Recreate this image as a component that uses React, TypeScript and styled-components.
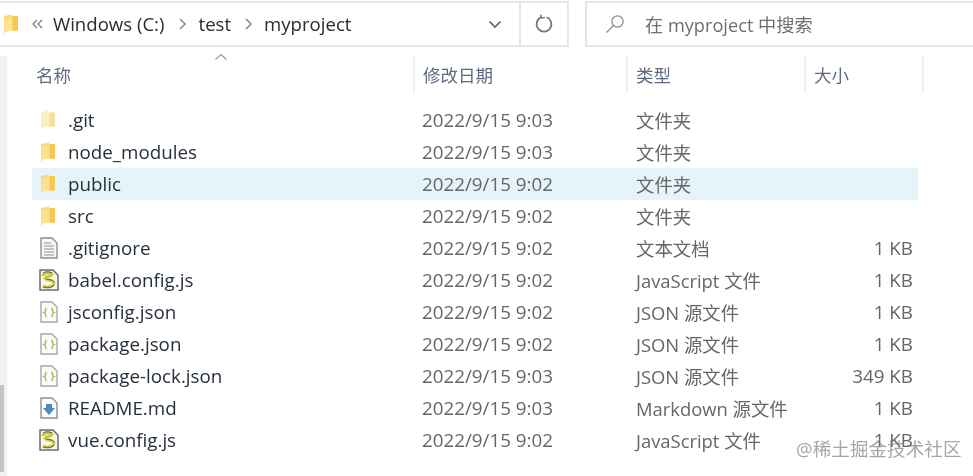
import React from "react";
import styled, { createGlobalStyle } from "styled-components";

const Global = createGlobalStyle`
  html, body { margin: 0; padding: 0; background: #fff; }
  #root { width: 973px; height: 476px; overflow: hidden; }
`;

const Page = styled.div`
  position: relative;
  width: 973px;
  height: 476px;
  overflow: hidden;
  background: #fff;
  font-family: "Open Sans", "Noto Sans CJK SC", sans-serif;
  filter: blur(0.5px);
`;

const TopBar = styled.div`
  display: flex;
  height: 46px;
  padding-top: 1px;
`;

const AddressBox = styled.div`
  width: 519px;
  display: flex;
  align-items: center;
  border-top: 2px solid #e6e6e6;
  border-bottom: 2px solid #e6e6e6;
  box-sizing: border-box;
  font-size: 18.6px;
  color: #2b2b2b;
  padding-left: 3px;
`;

const Crumb = styled.span`
  line-height: 1;
`;

const Chevrons = styled.span`
  display: flex;
  margin: 0 10px 0 13px;
`;

const CrumbSep = styled.span<{ $r: number }>`
  display: flex;
  margin: 0 ${(p) => p.$r}px 0 13px;
`;

const DropArea = styled.div`
  margin-left: auto;
  width: 31px;
  display: flex;
  align-items: center;
`;

const RefreshBox = styled.div`
  width: 50px;
  display: flex;
  align-items: center;
  justify-content: center;
  border: 2px solid #e6e6e6;
  box-sizing: border-box;
`;

const SearchBox = styled.div`
  margin-left: 16px;
  flex: 1;
  display: flex;
  align-items: center;
  border: 2px solid #e6e6e6;
  border-right: none;
  box-sizing: border-box;
  padding-left: 18px;
  gap: 20px;
  color: #6f6f6f;
  font-size: 18.2px;
`;

const Body = styled.div`
  display: flex;
  height: 429px;
`;

const Track = styled.div`
  width: 7px;
  margin-top: 9px;
  background: #f1f1f1;
  position: relative;
  flex: none;
`;

const Thumb = styled.div`
  position: absolute;
  left: 0;
  top: 329px;
  width: 4px;
  height: 87px;
  background: #c6c6c6;
`;

const List = styled.div`
  flex: 1;
  padding-left: 25px;
`;

const Header = styled.div`
  position: relative;
  display: grid;
  grid-template-columns: 383px 213px 178px 118px;
  height: 37px;
  margin-top: 9px;
  margin-bottom: 11px;
`;

const HeadCell = styled.div<{ $pad: number }>`
  display: flex;
  align-items: center;
  padding-left: ${(p) => p.$pad}px;
  border-right: 2px solid #efefef;
  color: #5d6b80;
  font-size: 17.5px;
  box-sizing: border-box;
  height: 37px;
  padding-bottom: 1px;
`;

const SortCaret = styled.svg`
  position: absolute;
  left: 182px;
  top: -3px;
`;

const Row = styled.div<{ $hl?: boolean }>`
  display: grid;
  grid-template-columns: 36px 345px 215px 178px 108px;
  height: 32px;
  align-items: center;
  width: 886px;
  background: ${(p) => (p.$hl ? "#e5f3fb" : "transparent")};
`;

const IconCell = styled.div`
  display: flex;
  justify-content: flex-start;
  padding-left: 8px;
  align-items: center;
`;

const Name = styled.div`
  font-size: 18.8px;
  color: #26303c;
  white-space: nowrap;
  line-height: 1;
`;

const Cell = styled.div`
  font-size: 18.8px;
  color: #666;
  white-space: nowrap;
  padding-left: 9px;
`;

const TypeCell = styled(Cell)`
  padding-left: 8px;
  font-size: 18.4px;
`;

const SizeCell = styled(Cell)`
  text-align: right;
  padding-left: 0;
  padding-right: 1px;
`;

const Watermark = styled.div`
  position: absolute;
  left: 796px;
  top: 437px;
  font-size: 18.5px;
  line-height: 24px;
  color: rgba(130, 130, 130, 0.72);
  white-space: nowrap;
  letter-spacing: 0.1px;
`;

const Folder = () => (
  <svg width="16" height="20" viewBox="0 0 16 20">
    <path d="M1 2 L9 0.5 L9.5 2.5 L15 2 L15 16.5 L5 16.5 L1 19.5 Z" fill="#fcd978" />
    <path d="M1.5 5 L9.5 4 L9.5 16.5 L5 16.5 L1.5 19 Z" fill="#fde294" />
    <path d="M9.5 2 L15 2 L15 16.5 L9.5 16.5 Z" fill="#f7c850" />
  </svg>
);

const PaleFolder = () => (
  <svg width="16" height="20" viewBox="0 0 16 20">
    <path d="M1 2.5 L9 0.5 L9.5 2.5 L15 2.5 L15 16.5 L5 16.5 L1 19.5 Z" fill="#fbeec0" />
    <path d="M9.5 2.5 L15 2.5 L15 16.5 L9.5 16.5 Z" fill="#f8e09c" />
  </svg>
);

const TextFile = () => (
  <svg width="18" height="22" viewBox="0 0 18 22">
    <path d="M1 1 H12 L17 6 V21 H1 Z" fill="#f6f6f6" stroke="#8f8f8f" strokeWidth="1.4" />
    <path d="M4 6 H11 M4 9 H14 M4 12 H14 M4 15 H14 M4 18 H14" stroke="#b4b4b4" strokeWidth="1.3" />
  </svg>
);

const ScriptFile = () => (
  <svg width="22" height="24" viewBox="0 0 22 24" style={{ marginLeft: -2 }}>
    <path d="M2 2 H15 L20 7 V22 H2 Z" fill="#f6f6ee" stroke="#6b6b6b" strokeWidth="1.5" />
    <path d="M5 8 C5 4 13 4 14 6 C14 9 8 8 7 10 C7 13 16 11 16 15 C16 19 8 20 5 18" fill="none" stroke="#c9cc3c" strokeWidth="3" />
    <path d="M5 5 C8 3 12 4 14 5 M8 11 C10 12 14 11 16 14 M5 19 C9 20 14 20 16 17" fill="none" stroke="#55582a" strokeWidth="0.9" />
  </svg>
);

const JsonFile = () => (
  <svg width="18" height="22" viewBox="0 0 18 22">
    <path d="M1 1 H12 L17 6 V21 H1 Z" fill="#fcfcfc" stroke="#a8a8a8" strokeWidth="1.4" />
    <path d="M6.5 7 C5 8 6 11 4.5 11.5 C6 12 5 15 6.5 16 M11.5 7 C13 8 12 11 13.5 11.5 C12 12 13 15 11.5 16" fill="none" stroke="#a3c26a" strokeWidth="1.6" />
  </svg>
);

const MdFile = () => (
  <svg width="18" height="22" viewBox="0 0 18 22">
    <path d="M1 1 H12 L17 6 V21 H1 Z" fill="#fcfcfc" stroke="#8f8f8f" strokeWidth="1.4" />
    <path d="M6 7 H12 V11 H15 L9 18 L3 11 H6 Z" fill="#4a8dbb" />
  </svg>
);

type RowData = { name: string; date: string; type: string; size?: string; icon: React.ReactNode; hl?: boolean };

const rows: RowData[] = [
  { name: ".git", date: "2022/9/15 9:03", type: "文件夹", icon: <PaleFolder /> },
  { name: "node_modules", date: "2022/9/15 9:03", type: "文件夹", icon: <Folder /> },
  { name: "public", date: "2022/9/15 9:02", type: "文件夹", icon: <Folder />, hl: true },
  { name: "src", date: "2022/9/15 9:02", type: "文件夹", icon: <Folder /> },
  { name: ".gitignore", date: "2022/9/15 9:02", type: "文本文档", size: "1 KB", icon: <TextFile /> },
  { name: "babel.config.js", date: "2022/9/15 9:02", type: "JavaScript 文件", size: "1 KB", icon: <ScriptFile /> },
  { name: "jsconfig.json", date: "2022/9/15 9:02", type: "JSON 源文件", size: "1 KB", icon: <JsonFile /> },
  { name: "package.json", date: "2022/9/15 9:02", type: "JSON 源文件", size: "1 KB", icon: <JsonFile /> },
  { name: "package-lock.json", date: "2022/9/15 9:03", type: "JSON 源文件", size: "349 KB", icon: <JsonFile /> },
  { name: "README.md", date: "2022/9/15 9:03", type: "Markdown 源文件", size: "1 KB", icon: <MdFile /> },
  { name: "vue.config.js", date: "2022/9/15 9:02", type: "JavaScript 文件", size: "1 KB", icon: <ScriptFile /> },
];

const Chevron = () => (
  <svg width="9" height="14" viewBox="0 0 9 14">
    <path d="M2 2 L7 7 L2 12" fill="none" stroke="#8a8a8a" strokeWidth="1.5" />
  </svg>
);

export default function App() {
  return (
    <Page>
      <Global />
      <TopBar>
        <AddressBox>
          <Folder />
          <Chevrons>
            <svg width="11" height="10" viewBox="0 0 11 10">
              <path d="M5 1 L1 5 L5 9 M10 1 L6 5 L10 9" fill="none" stroke="#777" strokeWidth="1.2" />
            </svg>
          </Chevrons>
          <Crumb>Windows (C:)</Crumb>
          <CrumbSep $r={12}><Chevron /></CrumbSep>
          <Crumb>test</Crumb>
          <CrumbSep $r={11}><Chevron /></CrumbSep>
          <Crumb>myproject</Crumb>
          <DropArea>
            <svg width="14" height="9" viewBox="0 0 14 9">
              <path d="M1.5 1.5 L7 7 L12.5 1.5" fill="none" stroke="#666" strokeWidth="1.7" />
            </svg>
          </DropArea>
        </AddressBox>
        <RefreshBox>
          <svg width="20" height="20" viewBox="0 0 20 20">
            <path d="M12.5 3.2 A7.4 7.4 0 1 1 7 3.4" fill="none" stroke="#777" strokeWidth="1.7" />
            <path d="M6.5 0.8 L7.5 4 L11 3.4" fill="none" stroke="#777" strokeWidth="1.4" />
          </svg>
        </RefreshBox>
        <SearchBox>
          <svg width="20" height="20" viewBox="0 0 20 20">
            <circle cx="12.5" cy="7.5" r="5.6" fill="none" stroke="#8a8a8a" strokeWidth="1.2" />
            <path d="M8.5 11.5 L1.5 18.5" stroke="#8a8a8a" strokeWidth="1.3" />
          </svg>
          <span>在 myproject 中搜索</span>
        </SearchBox>
      </TopBar>
      <Body>
        <Track>
          <Thumb />
        </Track>
        <List>
          <Header>
            <HeadCell $pad={4}>名称</HeadCell>
            <HeadCell $pad={8}>修改日期</HeadCell>
            <HeadCell $pad={8}>类型</HeadCell>
            <HeadCell $pad={8}>大小</HeadCell>
            <SortCaret width="14" height="8" viewBox="0 0 14 8">
              <path d="M1.5 6.5 L7 1.5 L12.5 6.5" fill="none" stroke="#9a9a9a" strokeWidth="1.2" />
            </SortCaret>
          </Header>
          {rows.map((r) => (
            <Row key={r.name} $hl={r.hl}>
              <IconCell>{r.icon}</IconCell>
              <Name>{r.name}</Name>
              <Cell>{r.date}</Cell>
              <TypeCell>{r.type}</TypeCell>
              <SizeCell>{r.size ?? ""}</SizeCell>
            </Row>
          ))}
        </List>
      </Body>
      <Watermark>@稀土掘金技术社区</Watermark>
    </Page>
  );
}
